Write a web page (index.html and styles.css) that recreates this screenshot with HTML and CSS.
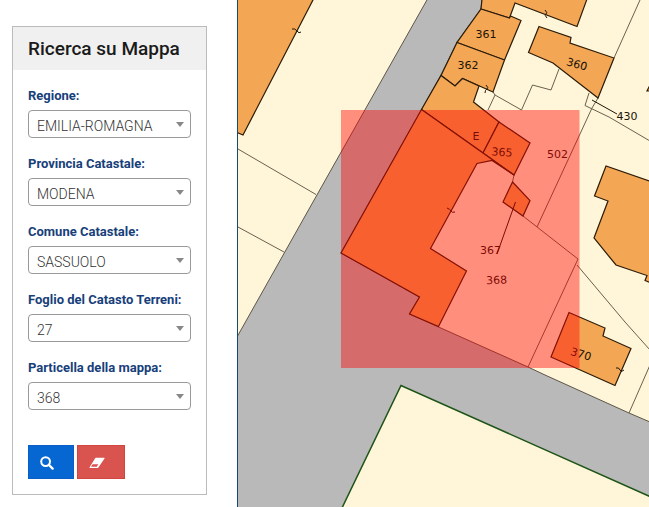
FILE: index.html
```html
<!DOCTYPE html>
<html lang="it">
<head>
<meta charset="utf-8">
<meta name="viewport" content="width=device-width, initial-scale=1">
<title>Ricerca su Mappa</title>
<link rel="stylesheet" href="styles.css">
</head>
<body>
<div class="layout">
  <aside class="sidebar">
    <form class="panel">
      <h1 class="panel-title">Ricerca su Mappa</h1>
      <div class="panel-body">
        <div class="field">
          <label for="regione">Regione:</label>
          <div class="picker"><select id="regione"><option>EMILIA-ROMAGNA</option></select></div>
        </div>
        <div class="field">
          <label for="provincia">Provincia Catastale:</label>
          <div class="picker"><select id="provincia"><option>MODENA</option></select></div>
        </div>
        <div class="field">
          <label for="comune">Comune Catastale:</label>
          <div class="picker"><select id="comune"><option>SASSUOLO</option></select></div>
        </div>
        <div class="field">
          <label for="foglio">Foglio del Catasto Terreni:</label>
          <div class="picker"><select id="foglio"><option>27</option></select></div>
        </div>
        <div class="field">
          <label for="particella">Particella della mappa:</label>
          <div class="picker"><select id="particella"><option>368</option></select></div>
        </div>
        <div class="actions">
          <button type="button" class="btn btn-search" aria-label="Cerca">
            <svg class="icon" viewBox="0 0 14 14"><circle cx="5.6" cy="5.6" r="4.4" fill="none" stroke="#fff" stroke-width="2"/><path d="M9 9l3.6 3.6" stroke="#fff" stroke-width="2.4" stroke-linecap="round"/></svg>
          </button>
          <button type="button" class="btn btn-clear" aria-label="Cancella">
            <svg class="icon icon-wide" viewBox="0 0 16 12"><path d="M7 .8h8.2q.8 0 .3.8L9.4 10.400q-.4.6-1.100.6H1q-.9 0-.4-.8L6 1.400Q6.300.8 7 .8z" fill="#fff"/><path d="M3.600 7.200h5.800L7.700 9.800H2z" fill="#d9534f"/></svg>
          </button>
        </div>
      </div>
    </form>
  </aside>
  <main class="map">
    <svg class="map-canvas" viewBox="238 0 411 507" preserveAspectRatio="xMinYMin slice" role="img" aria-label="Mappa catastale">
      <rect class="road" x="238" width="411" height="507"/>
      <!-- parcels -->
      <path class="land" d="M237-1H427.500L331 170 237 337z"/>
      <path class="land" d="M482-1L481 9 457 42 441 75 421.500 109.500 341 253 419.500 297 409.500 314 438.500 327 528 367 545 375 629 413 650 422V-1z"/>
      <path class="land green" d="M341.500 509L401 385.500 651 497V509z"/>
      <!-- boundaries -->
      <path class="line" d="M238 149L316 194.500M238 227L284 252M640 0L614 58M598 98L592 108 537 227M589 93L585 105.500 609 117 650 141M559 69L551 90 532.500 85 521.500 110 495 95 493 92M495 95L488 110M523 216L578 259 528 367M577 265L625 322 650 350M629 413L650 365M514 175L512.500 182"/>
      <!-- buildings -->
      <g class="building">
        <path d="M237-1H313.500L243 135 237 132.500z"/>
        <path d="M482-1L481 9 509.500 18 515 3 577 26.500 587-1z"/>
        <path d="M481 9L509.500 18 510.500 16 521 20.500 504.500 60 457 42.500z"/>
        <path d="M457 42.500L504.500 60 493 92 462.500 78.500 455 86 441 75.500z"/>
        <path d="M441 75.500L455 86 462.500 78.500 479 86 473.500 102 499 122 483 153 421.500 109.500z"/>
        <path d="M499 122L530 143 514 175 483 153z"/>
        <path d="M421.500 109.500L483 153 514 175 492 160.500 477 163.500 430.500 248.500 466.500 271 438.500 326.500 409.500 314 419.500 297 341 253z"/>
        <path d="M512.500 182L530 200.500 523 216 503 202z"/>
        <path d="M539 26.500L571 37.500 570 43 614 58 598 98 553 63 528.500 52.500z"/>
        <path d="M651 181.500L606 166 594.500 196 608 201 594 238 616 265 647 275.500 645 280.500 651 283z"/>
        <path d="M569 312.500L605 328 603 336 631 348.500 615 385.500 551 357z"/>
        <path d="M651 83L647 91 651 91z"/>
      </g>
      <path class="mark" d="M292 29q3-1 5 2t4 1M545 10q3 3 1 4t1 4M486 85q3 3 1 4t-2 4M447 208q3 1 4 3t4 1M616 368q3-1 4 2t4 0M592 100L617 114M515.500 202L497 254"/>
      <g class="number">
        <text x="486" y="38">361</text>
        <text x="468" y="69">362</text>
        <text x="577" y="68" transform="rotate(16 577 64)">360</text>
        <text x="627" y="120">430</text>
        <text x="476" y="140">E</text>
        <text x="502" y="156" transform="rotate(4 502 152)">365</text>
        <text x="557.500" y="158">502</text>
        <text x="490.500" y="254">367</text>
        <text x="496.500" y="284" transform="rotate(-2 496 280)">368</text>
        <text x="581" y="358" transform="rotate(17 581 354)">370</text>
      </g>
      <rect class="selection" x="341" y="110" width="238.500" height="258"/>
    </svg>
  </main>
</div>
</body>
</html>
```
FILE: styles.css
```css
* {
  box-sizing: border-box;
}

body {
  margin: 0;
  background: #fff;
  color: #222;
  font-family: Roboto, "Liberation Sans", sans-serif;
}

.layout {
  display: flex;
  min-height: 100vh;
}

.sidebar {
  flex: 0 0 237px;
  min-width: 0;
  padding: 26px 30px 12px 12px;
}

.panel {
  border: 1px solid #bbb;
}

.panel-title {
  margin: 0;
  padding: 0 15px;
  background: #f0f0f0;
  color: #1a1a1a;
  font-size: 19px;
  font-weight: 500;
  line-height: 43px;
  white-space: nowrap;
}

.panel-body {
  padding: 16px 15px 15px;
}

.field {
  margin-bottom: 16px;
}

.field label {
  display: block;
  color: #17407a;
  font-size: 13px;
  font-weight: 700;
  line-height: 20px;
  margin-bottom: 4px;
  white-space: nowrap;
}

.picker {
  position: relative;
}

.picker::after {
  content: "";
  position: absolute;
  top: 12px;
  right: 7px;
  border: 4px solid transparent;
  border-top: 5px solid #888;
  border-bottom: 0;
  pointer-events: none;
}

.picker select {
  display: block;
  width: 100%;
  height: 28px;
  padding: 4px 20px 0 8px;
  appearance: none;
  border: 1px solid #999;
  border-radius: 4px;
  background: #fff;
  color: #333;
  font-family: inherit;
  font-size: 14px;
  font-weight: 300;
}

.actions {
  display: flex;
  gap: 3px;
  padding-top: 19px;
}

.btn {
  display: flex;
  align-items: center;
  height: 34px;
  padding: 2px 19px 0 11px;
  border: 1px solid #0b5ec4;
  background: #0666d2;
}

.btn-clear {
  border-color: #cf4541;
  background: #d9534f;
}

.icon {
  width: 14px;
  height: 14px;
}

.icon-wide {
  width: 16px;
  height: 12px;
}

.map {
  flex: 1;
  min-width: 0;
  height: 100vh;
  border-left: 1px solid #174a70;
}

.map-canvas {
  display: block;
  width: 100%;
  height: 100%;
}

.road {
  fill: #b9b9b9;
}

.land {
  fill: #fff5d8;
  stroke: #5c5648;
}

.green {
  stroke: #1d5418;
  stroke-width: 1.5;
}

.line {
  fill: none;
  stroke: #67624f;
}

.building {
  fill: #f3a654;
  stroke: #2b1c08;
  stroke-width: 1.2;
}

.mark {
  fill: none;
  stroke: #1c1408;
}

.number {
  fill: #1c1408;
  font-family: "DejaVu Sans", sans-serif;
  font-size: 11px;
  text-anchor: middle;
}

.selection {
  fill: #f00;
  fill-opacity: 0.42;
}
```
